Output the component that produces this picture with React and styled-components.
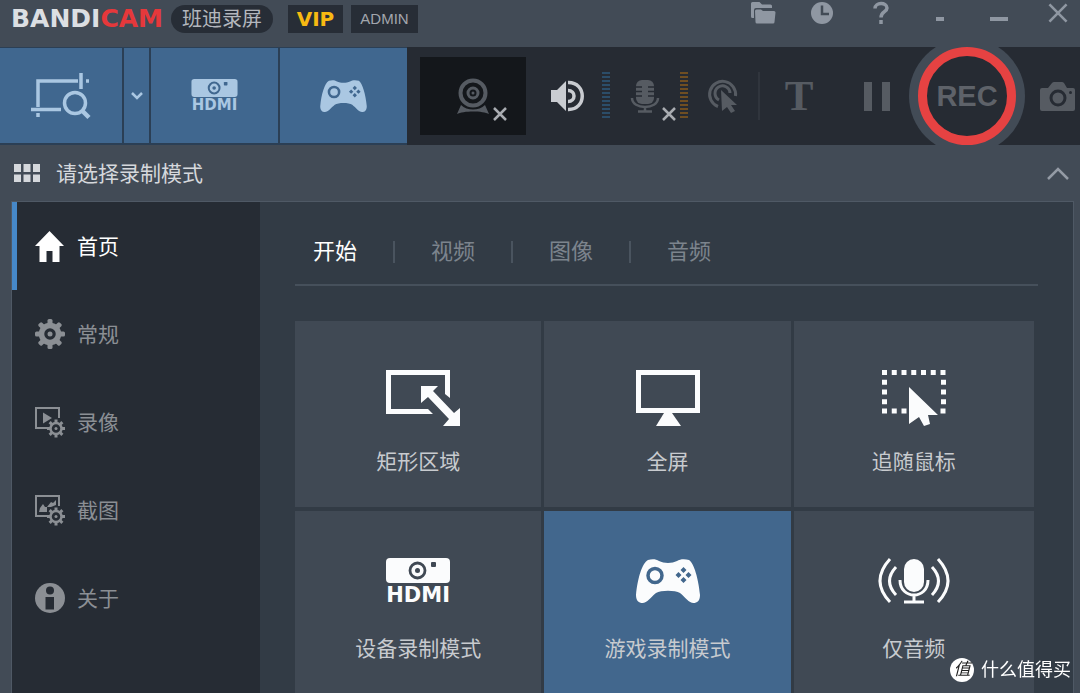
import React, { useState } from 'react';
import styled, { createGlobalStyle, css } from 'styled-components';

const sans = '"Liberation Sans", "Noto Sans CJK SC", sans-serif';
const wide = '"DejaVu Sans", "Noto Sans CJK SC", sans-serif';

const GlobalStyle = createGlobalStyle`
  * {
    box-sizing: border-box;
  }
  body {
    margin: 0;
    background: #424b56;
    font-family: ${sans};
  }
  button {
    margin: 0;
    padding: 0;
    border: 0;
    background: none;
    color: inherit;
    font: inherit;
    cursor: pointer;
  }
  svg {
    display: block;
    flex: none;
    overflow: visible;
  }
`;

const Window = styled.div`
  display: flex;
  flex-direction: column;
  min-height: 100vh;
`;

const TitleBar = styled.header`
  display: flex;
  justify-content: space-between;
  align-items: flex-start;
  height: 47px;
  padding-left: 11px;
`;

const Brand = styled.div`
  display: flex;
  align-items: center;
  height: 28px;
  margin-top: 5px;
`;

const Logo = styled.h1`
  margin: 0 8px 0 0;
  color: #dcdfe3;
  font: bold 25px/28px ${wide};
  span {
    color: #e5383b;
  }
`;

const Pill = styled.span`
  padding: 0 11px;
  margin-right: 15px;
  border-radius: 14px;
  background: #272d36;
  color: #b3b7bd;
  font-size: 20px;
  line-height: 28px;
`;

const Badge = styled.span`
  width: ${({ $gold }) => ($gold ? '55px' : '67px')};
  margin-right: 8px;
  background: #272d36;
  color: ${({ $gold }) => ($gold ? '#f7b912' : '#a2a6ad')};
  font: ${({ $gold }) => ($gold ? `bold 20px/28px ${wide}` : `15px/28px ${sans}`)};
  text-align: center;
`;

const WindowButtons = styled.div`
  display: flex;
  gap: 15px;
  color: #8f97a2;
`;

const WindowButton = styled.button`
  display: flex;
  align-items: center;
  justify-content: center;
  width: 44px;
  height: 26px;
`;

const Toolbar = styled.div`
  display: flex;
  height: 98px;
  background: #262b33;
`;

const Modes = styled.div`
  display: flex;
  gap: 2px;
  padding: 1px 0 2px;
  background: #2b3f55;
`;

const ModeButton = styled.button`
  display: flex;
  flex-direction: column;
  align-items: center;
  justify-content: center;
  width: ${({ $width }) => $width}px;
  background: #40678f;
  color: #aac7e2;
`;

const Tools = styled.div`
  display: flex;
  flex: 1;
  align-items: center;
  padding-left: 13px;
  overflow: hidden;
  color: #565b62;
`;

const Tool = styled.button`
  position: relative;
  display: flex;
  align-items: center;
  justify-content: center;
  width: ${({ $width }) => $width || 70}px;
  height: 78px;
  color: ${({ $on }) => ($on ? '#c9ccd1' : 'inherit')};
`;

const WebcamTool = styled(Tool)`
  margin-right: 6px;
  background: #14171b;
`;

const OffMark = styled.span`
  position: absolute;
  right: ${({ $right }) => $right}px;
  bottom: 14px;
  color: #a9acb1;
`;

const Meter = styled.span`
  width: 8px;
  height: 48px;
  background: repeating-linear-gradient(
    ${({ $color }) => $color} 0 2px,
    #262b33 2px 4px
  );
`;

const Divider = styled.span`
  width: 2px;
  height: 48px;
  background: #30353d;
`;

const TextTool = styled(Tool)`
  font: bold 43px/78px "Liberation Serif", serif;
`;

const RecButton = styled.button`
  flex: none;
  width: 98px;
  height: 98px;
  margin-left: auto;
  border: 9px solid #e64242;
  border-radius: 50%;
  background: #262b33;
  box-shadow: 0 0 0 9px #424b56;
  color: #5e6269;
  font-size: 29px;
  font-weight: bold;
`;

const CameraTool = styled(Tool)`
  justify-content: flex-end;
  padding-right: 5px;
`;

const ModeHeader = styled.div`
  display: flex;
  align-items: center;
  height: 56px;
  padding: 0 11px 0 14px;
  color: #d5d8dc;
  h2 {
    flex: 1;
    margin: 0 0 0 16px;
    padding-top: 2px;
    font-size: 21px;
    font-weight: normal;
    line-height: 32px;
  }
  button {
    color: #949ba5;
  }
`;

const Panel = styled.div`
  display: flex;
  flex: 1;
  margin: 0 6px 0 11px;
  border: 1px solid #4f5965;
  border-bottom: 0;
  background: #323b45;
`;

const Sidebar = styled.nav`
  flex: none;
  width: 248px;
  background: #262c34;
`;

const SideItem = styled.button`
  display: flex;
  align-items: center;
  gap: 12px;
  width: 100%;
  height: 88px;
  padding-left: 18px;
  border-left: 5px solid transparent;
  color: #8b8f94;
  font-size: 21px;
  line-height: 32px;
  span {
    padding-top: 2px;
  }
  ${({ $active }) =>
    $active &&
    css`
      border-color: #4688c8;
      color: #fff;
    `}
`;

const Content = styled.main`
  flex: 1;
  padding: 0 35px;
`;

const Tabs = styled.div`
  display: flex;
  align-items: center;
  gap: 36px;
  height: 84px;
  padding: 18px 18px 0;
  border-bottom: 2px solid #46505b;
`;

const Tab = styled.button`
  color: ${({ $active }) => ($active ? '#fff' : '#7c848d')};
  font-size: 22px;
  line-height: 32px;
`;

const TabDivider = styled.span`
  width: 2px;
  height: 22px;
  background: #4a545f;
`;

const Tiles = styled.div`
  display: grid;
  grid-template-columns: 41fr 41fr 40fr;
  grid-template-rows: 186px 182px;
  gap: 4px 3px;
  margin: 35px 4px 0 0;
`;

const Tile = styled.button`
  display: flex;
  flex-direction: column;
  align-items: center;
  gap: ${({ $short }) => ($short ? '22px' : '18px')};
  padding-top: ${({ $short }) => ($short ? '40px' : '47px')};
  background: ${({ $active }) => ($active ? '#42678d' : '#404954')};
  color: #c8cbcf;
  font-size: 21px;
  line-height: 32px;
`;

const TileIcon = styled.span`
  display: flex;
  flex-direction: column;
  align-items: center;
  justify-content: center;
  height: 60px;
  color: #fbfcfd;
`;

const HdmiText = styled.span`
  margin-top: ${({ $large }) => ($large ? '3px' : '1px')};
  font: bold ${({ $large }) => ($large ? '21px/18px' : '15px/14px')} ${wide};
`;

const Watermark = styled.div`
  position: fixed;
  right: 9px;
  bottom: 10px;
  display: flex;
  align-items: center;
  gap: 7px;
  color: #fff;
  font-size: 18px;
  line-height: 26px;
`;

const WatermarkSeal = styled.span`
  width: 24px;
  height: 24px;
  border-radius: 50%;
  background: #fff;
  color: #222;
  font-size: 17px;
  font-style: italic;
  line-height: 24px;
  text-align: center;
`;

function FoldersIcon() {
  return (
    <svg width="25" height="22" viewBox="0 0 25 22" fill="currentColor">
      <path d="M0 1.500Q0 0 1.500 0H8.500L11 2.500H19.500Q21 2.500 21 4V6H5Q3 6 3 8V16H1.500Q0 16 0 14.500Z" />
      <path d="M4 9Q4 7.500 5.500 7.500H10L12 9H23Q24.500 9 24.500 10.500L23.500 20Q23.500 21.500 22 21.500H6Q4.500 21.500 4.500 20Z" />
    </svg>
  );
}

function ClockIcon() {
  return (
    <svg width="22" height="22" viewBox="0 0 22 22">
      <circle cx="11" cy="11" r="11" fill="currentColor" />
      <path d="M11 3.500V12H18" fill="none" stroke="#424b56" strokeWidth="2.500" />
    </svg>
  );
}

function QuestionIcon() {
  return (
    <svg width="16" height="22" viewBox="0 0 16 22" fill="none" stroke="currentColor" strokeWidth="3.500">
      <path d="M2 6.500C2 0 14 0 14 6C14 10 8 9.500 8 15.500" />
      <path d="M8 18V22" />
    </svg>
  );
}

function CrossIcon({ size = 14, weight = 2.5 }) {
  return (
    <svg width={size} height={size} viewBox="0 0 14 14" fill="none" stroke="currentColor" strokeWidth={weight}>
      <path d="M1 1L13 13M13 1L1 13" />
    </svg>
  );
}

function DashIcon({ width }) {
  return (
    <svg width={width} height="15" viewBox={`0 0 ${width} 15`}>
      <rect y="11" width={width} height="4" fill="currentColor" />
    </svg>
  );
}

function ChevronIcon({ up }) {
  return up ? (
    <svg width="22" height="13" viewBox="0 0 22 13" fill="none" stroke="currentColor" strokeWidth="2.500">
      <path d="M1 12L11 2L21 12" />
    </svg>
  ) : (
    <svg width="12" height="8" viewBox="0 0 12 8" fill="none" stroke="currentColor" strokeWidth="2.500">
      <path d="M1 1L6 6L11 1" />
    </svg>
  );
}

function RegionSearchIcon() {
  return (
    <svg width="60" height="46" viewBox="1 0 60 46" fill="none" stroke="currentColor" strokeWidth="3.500">
      <path d="M8 34V8H48M51 0V16M1 36.500H31M56 8H59M8 40V44" />
      <circle cx="45" cy="30" r="10.500" />
      <path d="M52 37.500L59 44.500" strokeWidth="4.500" />
    </svg>
  );
}

function HdmiIcon({ large, hole }) {
  const width = large ? 64 : 47;
  return (
    <>
      <svg width={width} height={large ? 25 : 18} viewBox="0 0 64 25">
        <rect width="64" height="25" rx="4" fill="currentColor" />
        <circle cx="31.500" cy="12.500" r="7.500" fill="none" stroke={hole} strokeWidth="2.800" />
        <circle cx="31.500" cy="12.500" r="2.500" fill={hole} />
        <rect x="45" y="4" width="5" height="5" rx="1" fill={hole} />
      </svg>
      <HdmiText $large={large}>HDMI</HdmiText>
    </>
  );
}

function GamepadIcon({ width = 64, hole }) {
  return (
    <svg width={width} height={Math.round(width * 0.69)} viewBox="0 0 64 44">
      <path
        fill="currentColor"
        d="M12 1C16 0 20 0 23 2C28 4.500 36 4.500 41 2C44 0 49 0 53 1C58 4 62.500 20 64 36C64 42 61 44 57.500 44C53 44 49 38 44 34C39 31 25 31 20 34C15 38 11 44 6.500 44C3 44 0 42 0 36C1.500 20 6 4 12 1Z"
      />
      <circle cx="19" cy="16.500" r="7" fill="none" stroke={hole} strokeWidth="3.500" />
      <path
        fill={hole}
        d="M47.500 8L50.500 11L47.500 14L44.500 11ZM47.500 18L50.500 21L47.500 24L44.500 21ZM42.500 13L45.500 16L42.500 19L39.500 16ZM52.500 13L55.500 16L52.500 19L49.500 16Z"
      />
    </svg>
  );
}

function WebcamIcon() {
  return (
    <svg width="32" height="36" viewBox="0 0 32 36">
      <g fill="none" stroke="currentColor">
        <circle cx="16" cy="15" r="12.500" strokeWidth="4" />
        <circle cx="16" cy="15" r="5" strokeWidth="3" />
      </g>
      <circle cx="16" cy="15" r="1.500" fill="currentColor" />
      <path d="M0 36L4 27C10 33 22 33 28 27L32 36C26 32.500 6 32.500 0 36Z" fill="currentColor" />
    </svg>
  );
}

function SpeakerIcon() {
  return (
    <svg width="34" height="32" viewBox="-1 0 34 32">
      <path d="M0 10H6L15 1V31L6 22H0Z" fill="currentColor" />
      <g fill="none" stroke="currentColor" strokeWidth="3.500">
        <path d="M17 10.500C25 10.500 25 21.500 17 21.500" />
        <path d="M17 2.500C36 2 36 30 17 29.500" />
      </g>
    </svg>
  );
}

function MicToolIcon() {
  return (
    <svg width="28" height="33" viewBox="0 0 28 33">
      <rect x="5" width="18" height="24" rx="6" fill="currentColor" />
      <path d="M5 7H11M17 7H23M5 11.500H11M17 11.500H23M5 16H11M17 16H23" stroke="#262b33" strokeWidth="1.500" />
      <g fill="none" stroke="currentColor" strokeWidth="2.500">
        <path d="M1 18C1 30 27 30 27 18M14 27V31M7 31.500H21" />
      </g>
    </svg>
  );
}

function ClickIcon() {
  return (
    <svg width="30" height="34" viewBox="0 0 30 34">
      <g fill="none" stroke="currentColor" strokeWidth="3">
        <path d="M10 27.500A13 13 0 1 1 27.500 17" />
        <path d="M11 21A7.500 7.500 0 1 1 22 14" />
      </g>
      <path d="M13 11L29 26H23L27 32L23 34L19 28L14 32Z" fill="currentColor" />
    </svg>
  );
}

function PauseIcon() {
  return (
    <svg width="26" height="29" viewBox="0 0 26 29" fill="currentColor">
      <path d="M0 0H8V29H0ZM18 0H26V29H18Z" />
    </svg>
  );
}

function CameraIcon() {
  return (
    <svg width="35" height="29" viewBox="0 0 35 29">
      <path
        fill="currentColor"
        d="M2 6H8L12 1Q13 0 14 0H22Q23 0 24 1L27 6H33Q35 6 35 8V27Q35 29 33 29H2Q0 29 0 27V8Q0 6 2 6Z"
      />
      <circle cx="18" cy="16" r="7" fill="none" stroke="#262b33" strokeWidth="3" />
      <circle cx="30.500" cy="10.500" r="1.500" fill="#262b33" />
    </svg>
  );
}

function GridIcon() {
  return (
    <svg width="26" height="18" viewBox="0 0 26 18" fill="currentColor">
      <path d="M0 0H7V8H0ZM9.500 0H16.500V8H9.500ZM19 0H26V8H19ZM0 10.500H7V18H0ZM9.500 10.500H16.500V18H9.500ZM19 10.500H26V18H19Z" />
    </svg>
  );
}

function HomeIcon() {
  return (
    <svg width="30" height="31" viewBox="0 0 30 31" fill="currentColor">
      <path d="M14.500 0L29 15H24.500V31H17.500V20H11.500V31H4.500V15H0Z" />
    </svg>
  );
}

const teeth = [0, 45, 90, 135, 180, 225, 270, 315];

function GearIcon() {
  return (
    <svg width="30" height="30" viewBox="0 0 30 30">
      <circle cx="15" cy="15" r="8.500" fill="none" stroke="currentColor" strokeWidth="5.500" />
      <circle cx="15" cy="15" r="2.500" fill="currentColor" />
      {teeth.map((angle) => (
        <rect key={angle} x="12.500" y="0" width="5" height="6" rx="1.500" fill="currentColor" transform={`rotate(${angle} 15 15)`} />
      ))}
    </svg>
  );
}

function FrameGearIcon({ children }) {
  return (
    <svg width="30" height="31" viewBox="0 0 30 31">
      <path d="M12 21H1V1H24V11" fill="none" stroke="currentColor" strokeWidth="2" />
      {children}
      <circle cx="21" cy="21.500" r="5.500" fill="none" stroke="currentColor" strokeWidth="2.500" />
      <circle cx="21" cy="21.500" r="1.500" fill="currentColor" />
      {teeth.map((angle) => (
        <rect key={angle} x="19.500" y="12.500" width="3" height="3" fill="currentColor" transform={`rotate(${angle} 21 21.500)`} />
      ))}
    </svg>
  );
}

function VideoIcon() {
  return (
    <FrameGearIcon>
      <path d="M8 5.500L17 11L8 16.500Z" fill="currentColor" />
    </FrameGearIcon>
  );
}

function ImageIcon() {
  return (
    <FrameGearIcon>
      <path d="M4 17L5 13L8 9L10 12L12 12V17ZM12 12L16 7L18 8L21 5V10L16 12Z" fill="currentColor" />
    </FrameGearIcon>
  );
}

function InfoIcon() {
  return (
    <svg width="30" height="30" viewBox="0 0 30 30">
      <circle cx="15" cy="15" r="15" fill="currentColor" />
      <circle cx="15" cy="7.500" r="4" fill="#262c34" />
      <path d="M10.500 14H19V26.500H10.500Z" fill="#262c34" />
    </svg>
  );
}

function RectangleIcon() {
  return (
    <svg width="64" height="56" viewBox="0 0 64 56">
      <path d="M42 41.500H2.500V2.500H61.500V24" fill="none" stroke="currentColor" strokeWidth="5" />
      <path d="M42 39L47 44H42ZM59 24H64V28Z" fill="currentColor" />
      <path d="M35 16H52L47 21L68 43L74 38V56H57L63 49L42 27L35 33Z" fill="currentColor" />
    </svg>
  );
}

function MonitorIcon() {
  return (
    <svg width="64" height="56" viewBox="0 0 64 56">
      <rect x="2.500" y="2.500" width="59" height="38" fill="none" stroke="currentColor" strokeWidth="5" />
      <path d="M28 43H36L45 56H20Z" fill="currentColor" />
    </svg>
  );
}

function FollowCursorIcon() {
  return (
    <svg width="64" height="56" viewBox="0 0 64 56">
      <g stroke="currentColor" strokeWidth="5" strokeDasharray="5 4.750">
        <path d="M0 2.500H64M0 41H25" />
        <path d="M2.500 9.750V38M61.500 9.750V38" />
        <path d="M58.500 41H64" />
      </g>
      <path d="M27 17L56 45L46 45L48 54L42 56L37 47L27 54Z" fill="currentColor" />
    </svg>
  );
}

function AudioOnlyIcon() {
  return (
    <svg width="72" height="46" viewBox="0 0 72 46">
      <rect x="26" y="1" width="20" height="33" rx="10" fill="currentColor" />
      <g fill="none" stroke="currentColor" strokeWidth="3">
        <path d="M22 22C22 42 50 42 50 22M36 37V43M26 44H46" />
        <path d="M12 1Q-8 23 12 44M60 1Q80 23 60 44" />
        <path d="M18 9Q5 23 18 37M54 9Q67 23 54 37" />
      </g>
    </svg>
  );
}

const sideItems = [
  { label: '首页', icon: <HomeIcon /> },
  { label: '常规', icon: <GearIcon /> },
  { label: '录像', icon: <VideoIcon /> },
  { label: '截图', icon: <ImageIcon /> },
  { label: '关于', icon: <InfoIcon /> },
];

const tabs = ['开始', '视频', '图像', '音频'];

const tiles = [
  { label: '矩形区域', icon: <RectangleIcon /> },
  { label: '全屏', icon: <MonitorIcon /> },
  { label: '追随鼠标', icon: <FollowCursorIcon /> },
  { label: '设备录制模式', icon: <HdmiIcon large hole="#404954" /> },
  { label: '游戏录制模式', icon: <GamepadIcon hole="#42678d" /> },
  { label: '仅音频', icon: <AudioOnlyIcon /> },
];

function App() {
  const [page, setPage] = useState(0);
  const [tab, setTab] = useState(0);
  const [mode, setMode] = useState(4);

  return (
    <Window>
      <GlobalStyle />
      <TitleBar>
        <Brand>
          <Logo>
            BANDI<span>CAM</span>
          </Logo>
          <Pill>班迪录屏</Pill>
          <Badge $gold>VIP</Badge>
          <Badge>ADMIN</Badge>
        </Brand>
        <WindowButtons>
          <WindowButton aria-label="Open folder"><FoldersIcon /></WindowButton>
          <WindowButton aria-label="Schedule"><ClockIcon /></WindowButton>
          <WindowButton aria-label="Help"><QuestionIcon /></WindowButton>
          <WindowButton aria-label="To tray"><DashIcon width={8} /></WindowButton>
          <WindowButton aria-label="Minimize"><DashIcon width={18} /></WindowButton>
          <WindowButton aria-label="Close"><CrossIcon size={20} weight={1.8} /></WindowButton>
        </WindowButtons>
      </TitleBar>

      <Toolbar>
        <Modes>
          <ModeButton $width={122} aria-label="Screen region"><RegionSearchIcon /></ModeButton>
          <ModeButton $width={25} aria-label="More regions"><ChevronIcon /></ModeButton>
          <ModeButton $width={127}><HdmiIcon hole="#40678f" /></ModeButton>
          <ModeButton $width={127} aria-label="Game mode"><GamepadIcon width={47} hole="#40678f" /></ModeButton>
        </Modes>
        <Tools>
          <WebcamTool $width={106} aria-label="Webcam">
            <WebcamIcon />
            <OffMark $right={19}><CrossIcon /></OffMark>
          </WebcamTool>
          <Tool $on aria-label="Speaker"><SpeakerIcon /></Tool>
          <Meter $color="#2b4d69" />
          <Tool aria-label="Microphone">
            <MicToolIcon />
            <OffMark $right={4}><CrossIcon /></OffMark>
          </Tool>
          <Meter $color="#6f4e22" />
          <Tool aria-label="Mouse effects"><ClickIcon /></Tool>
          <Divider />
          <TextTool $width={78}>T</TextTool>
          <Tool $width={78} aria-label="Pause"><PauseIcon /></Tool>
          <RecButton>REC</RecButton>
          <CameraTool $width={64} aria-label="Screenshot"><CameraIcon /></CameraTool>
        </Tools>
      </Toolbar>

      <ModeHeader>
        <GridIcon />
        <h2>请选择录制模式</h2>
        <button aria-label="Collapse"><ChevronIcon up /></button>
      </ModeHeader>

      <Panel>
        <Sidebar>
          {sideItems.map((item, index) => (
            <SideItem key={item.label} $active={page === index} onClick={() => setPage(index)}>
              {item.icon}
              <span>{item.label}</span>
            </SideItem>
          ))}
        </Sidebar>
        <Content>
          <Tabs>
            {tabs.map((label, index) => (
              <React.Fragment key={label}>
                {index > 0 && <TabDivider />}
                <Tab $active={tab === index} onClick={() => setTab(index)}>
                  {label}
                </Tab>
              </React.Fragment>
            ))}
          </Tabs>
          <Tiles>
            {tiles.map((tile, index) => (
              <Tile key={tile.label} $short={index > 2} $active={mode === index} onClick={() => setMode(index)}>
                <TileIcon>{tile.icon}</TileIcon>
                {tile.label}
              </Tile>
            ))}
          </Tiles>
        </Content>
      </Panel>

      <Watermark>
        <WatermarkSeal>值</WatermarkSeal>
        什么值得买
      </Watermark>
    </Window>
  );
}

export default App;
